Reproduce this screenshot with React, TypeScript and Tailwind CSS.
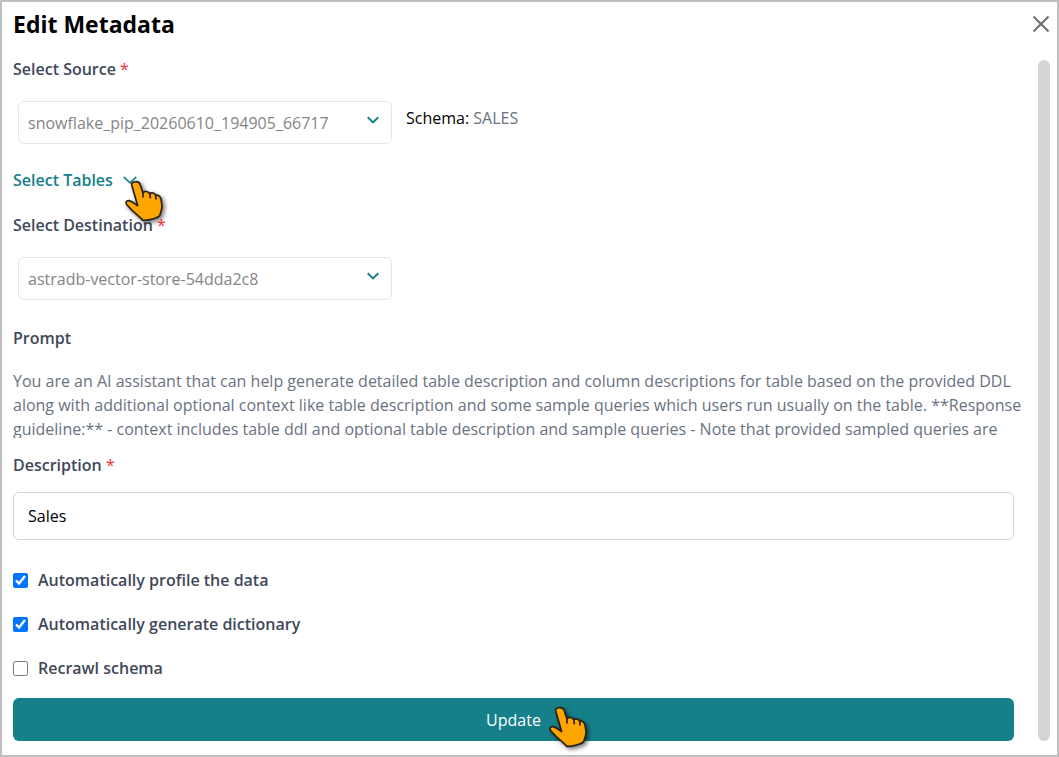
import type { ReactNode } from "react";

const promptText =
  "You are an AI assistant that can help generate detailed table description and column descriptions for table based on the provided DDL along with additional optional context like table description and some sample queries which users run usually on the table. **Response guideline:** - context includes table ddl and optional table description and sample queries - Note that provided sampled queries are";

const Hand = ({ className }: { className: string }) => (
  <svg
    viewBox="24 24 129 135"
    aria-hidden="true"
    className={`pointer-events-none absolute z-10 h-[45px] w-[43px] overflow-visible drop-shadow-[2px_2px_2px_rgba(0,0,0,0.55)] ${className}`}
  >
    <path
      d="M50 41 C48 30 71 29 75 39 L84 66 C88 59 100 60 104 68 C110 63 120 66 122 73 C130 70 136 76 138 84 L141 105 C141 116 138 120 134 134 C124 144 94 149 84 148 C75 138 62 128 52 119 L36 102 C30 95 34 88 42 89 C52 91 58 98 68 104 Z"
      fill="#ffa500"
      stroke="#2a2013"
      strokeWidth="5"
      strokeLinejoin="round"
    />
    <path d="M84 65v13 M104 67l2 13 M122 73l1 11" fill="none" stroke="#2a2013" strokeWidth="5" strokeLinecap="round" />
  </svg>
);

const Label = ({ htmlFor, required, children }: { htmlFor: string; required?: boolean; children: ReactNode }) => (
  <label htmlFor={htmlFor} className="self-start font-semibold text-[#3f4859]">
    {children}
    {required && <span className="font-normal text-red-500"> *</span>}
  </label>
);

const SelectBox = ({ id, value }: { id: string; value: string }) => (
  <div className="relative w-full max-w-[374px]">
    <select
      id={id}
      disabled
      defaultValue={value}
      className="block h-[43px] w-full appearance-none rounded-md border border-[#e6e6e6] bg-white pr-10 pl-[9px] text-[#858585] opacity-100"
    >
      <option value={value}>{value}</option>
    </select>
    <svg
      viewBox="0 0 12 8"
      aria-hidden="true"
      className="pointer-events-none absolute top-[15px] right-[13px] h-2 w-3"
      fill="none"
      stroke="#16808a"
      strokeWidth="2"
    >
      <path d="M0.7 1.2 6 6.4l5.3-5.2" />
    </svg>
  </div>
);

const CheckRow = ({ id, label, checked }: { id: string; label: string; checked?: boolean }) => (
  <div className="flex items-center gap-[10px]">
    <input id={id} type="checkbox" defaultChecked={checked} className="size-[15px] accent-[#0075ff]" />
    <label htmlFor={id} className="font-semibold text-[#3f4859]">
      {label}
    </label>
  </div>
);

const App = () => {
  return (
    <div className="flex min-h-screen flex-col border-2 border-[#bfbfbf] bg-white font-['Open_Sans','Noto_Sans',sans-serif] text-base text-black">
      <header className="flex items-center justify-between pt-[6px] pr-2 pl-[11px]">
        <h1 className="text-[23px] leading-8 font-bold">Edit Metadata</h1>
        <button type="button" aria-label="Close">
          <svg viewBox="0 0 16 16" className="size-4" fill="none" stroke="#6b6c76" strokeWidth="2">
            <path d="M0.5 0.5l15 15M15.5 0.5l-15 15" />
          </svg>
        </button>
      </header>

      <div className="flex flex-1 gap-6 pr-[7px] pb-[14px] pl-[11px]">
        <form className="mt-[17px] flex min-w-0 flex-1 flex-col">
          <Label htmlFor="source" required>
            Select Source
          </Label>
          <div className="mt-5 flex gap-[14px] pl-[5px]">
            <SelectBox id="source" value="snowflake_pip_20260610_194905_66717" />
            <p className="pt-[5px]">
              Schema: <span className="text-gray-500">SALES</span>
            </p>
          </div>

          <div className="relative mt-6 self-start">
            <button type="button" className="flex items-center gap-[10px] font-semibold text-[#16808a]">
              Select Tables
              <svg viewBox="0 0 14 8" aria-hidden="true" className="h-2 w-[14px]" fill="none" stroke="currentColor" strokeWidth="1.6">
                <path d="M0.7 0.8 7 6.8l6.3-6" />
              </svg>
            </button>
            <Hand className="top-[11px] left-[110px]" />
          </div>

          <div className="mt-[21px] flex flex-col">
            <Label htmlFor="destination" required>
              Select Destination
            </Label>
          </div>
          <div className="mt-5 pl-[5px]">
            <SelectBox id="destination" value="astradb-vector-store-54dda2c8" />
          </div>

          <h2 className="mt-[26px] font-semibold text-[#3f4859]">Prompt</h2>
          <p className="-mr-3 mt-[19px] h-[69px] overflow-hidden text-gray-500">{promptText}</p>

          <div className="mt-[15px] flex flex-col gap-[15px]">
            <Label htmlFor="description" required>
              Description
            </Label>
            <input
              id="description"
              type="text"
              defaultValue="Sales"
              className="h-12 w-full rounded-md border border-gray-300 px-[14px]"
            />
          </div>

          <div className="mt-7 flex flex-col gap-5">
            <CheckRow id="profile" label="Automatically profile the data" checked />
            <CheckRow id="dictionary" label="Automatically generate dictionary" checked />
            <CheckRow id="recrawl" label="Recrawl schema" />
          </div>

          <button type="submit" className="mt-[18px] flex h-[43px] items-center justify-center rounded-md bg-[#16808a] text-white">
            <span className="relative">
              Update
              <Hand className="-top-[3px] left-full ml-[6px]" />
            </span>
          </button>
        </form>

        <div className="mt-5 w-3 rounded-full bg-[#d3d5d4]" />
      </div>
    </div>
  );
};

export default App;
